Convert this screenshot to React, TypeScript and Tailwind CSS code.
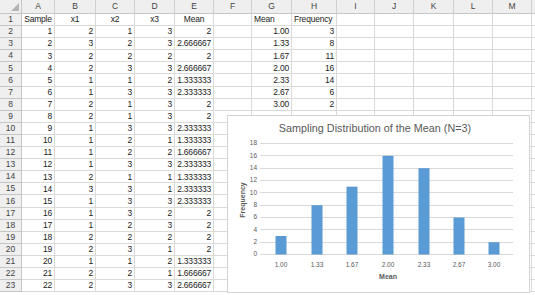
import React from "react";

const COLS: { l: string; w: number }[] = [
  { l: "A", w: 33 },
  { l: "B", w: 41 },
  { l: "C", w: 39 },
  { l: "D", w: 40 },
  { l: "E", w: 39 },
  { l: "F", w: 38 },
  { l: "G", w: 40 },
  { l: "H", w: 45 },
  { l: "I", w: 38 },
  { l: "J", w: 39 },
  { l: "K", w: 40 },
  { l: "L", w: 39 },
  { l: "M", w: 39 },
  { l: "", w: 30 },
];

const DATA: [number, number, number, number, string][] = [
  [1, 2, 1, 3, "2"],
  [2, 3, 2, 3, "2.666667"],
  [3, 2, 2, 2, "2"],
  [4, 2, 3, 3, "2.666667"],
  [5, 1, 1, 2, "1.333333"],
  [6, 1, 3, 3, "2.333333"],
  [7, 2, 1, 3, "2"],
  [8, 2, 1, 3, "2"],
  [9, 1, 3, 3, "2.333333"],
  [10, 1, 2, 1, "1.333333"],
  [11, 1, 2, 2, "1.666667"],
  [12, 1, 3, 3, "2.333333"],
  [13, 2, 1, 1, "1.333333"],
  [14, 3, 3, 1, "2.333333"],
  [15, 1, 3, 3, "2.333333"],
  [16, 1, 3, 2, "2"],
  [17, 1, 2, 3, "2"],
  [18, 2, 2, 2, "2"],
  [19, 2, 3, 1, "2"],
  [20, 1, 1, 2, "1.333333"],
  [21, 2, 2, 1, "1.666667"],
  [22, 2, 3, 3, "2.666667"],
];

const FREQ: [string, number][] = [
  ["1.00", 3],
  ["1.33", 8],
  ["1.67", 11],
  ["2.00", 16],
  ["2.33", 14],
  ["2.67", 6],
  ["3.00", 2],
];

type Cell = { t: string; a: "l" | "c" | "r" };

function rowCells(r: number): (Cell | null)[] {
  const cells: (Cell | null)[] = new Array(14).fill(null);
  if (r === 1) {
    cells[0] = { t: "Sample", a: "c" };
    cells[1] = { t: "x1", a: "c" };
    cells[2] = { t: "x2", a: "c" };
    cells[3] = { t: "x3", a: "c" };
    cells[4] = { t: "Mean", a: "c" };
    cells[6] = { t: "Mean", a: "l" };
    cells[7] = { t: "Frequency", a: "l" };
    return cells;
  }
  const d = DATA[r - 2];
  if (d) {
    cells[0] = { t: String(d[0]), a: "r" };
    cells[1] = { t: String(d[1]), a: "r" };
    cells[2] = { t: String(d[2]), a: "r" };
    cells[3] = { t: String(d[3]), a: "r" };
    cells[4] = { t: d[4], a: "r" };
  }
  const f = FREQ[r - 2];
  if (f) {
    cells[6] = { t: f[0], a: "r" };
    cells[7] = { t: String(f[1]), a: "r" };
  }
  return cells;
}

function Chart() {
  const y0 = 139;
  const unit = (139 - 28) / 18;
  const centers = [54, 90, 125, 161, 197, 232, 267];
  const ticks = [0, 2, 4, 6, 8, 10, 12, 14, 16, 18];
  return (
    <svg width="303" height="178" viewBox="0 0 303 178" className="block">
      <text
        x="148"
        y="17"
        textAnchor="middle"
        fontFamily="'Liberation Sans', Arial, sans-serif"
        fontSize="10.8"
        fill="#595959"
      >
        Sampling Distribution of the Mean (N=3)
      </text>
      {ticks.map((t) => {
        const y = y0 - t * unit;
        return (
          <g key={t}>
            <line x1="33" x2="286" y1={Math.round(y) + 0.5} y2={Math.round(y) + 0.5} stroke="#d9d9d9" strokeWidth="1" />
            <text
              x="30"
              y={y + 2.3}
              textAnchor="end"
              fontFamily="'Liberation Sans', Arial, sans-serif"
              fontSize="6.5"
              fill="#595959"
            >
              {t}
            </text>
          </g>
        );
      })}
      {FREQ.map(([lab, v], i) => {
        const h = v * unit;
        return (
          <g key={lab}>
            <rect x={centers[i] - 5.5} y={y0 - h + 0.5} width="11" height={h} fill="#5b9bd5" />
            <text
              x={centers[i]}
              y="151.5"
              textAnchor="middle"
              fontFamily="'Liberation Sans', Arial, sans-serif"
              fontSize="6.5"
              fill="#595959"
            >
              {lab}
            </text>
          </g>
        );
      })}
      <text
        x="161"
        y="163.5"
        textAnchor="middle"
        fontFamily="'Liberation Sans', Arial, sans-serif"
        fontSize="7"
        fontWeight="bold"
        fill="#595959"
      >
        Mean
      </text>
      <text
        x="0"
        y="0"
        transform="translate(17.5 85) rotate(-90)"
        textAnchor="middle"
        fontFamily="'Liberation Sans', Arial, sans-serif"
        fontSize="7"
        fontWeight="bold"
        fill="#595959"
      >
        Frequency
      </text>
    </svg>
  );
}

export default function App() {
  const rows = Array.from({ length: 23 }, (_, i) => i + 1);
  return (
    <div
      className="relative w-[535px] h-[295px] overflow-hidden bg-white text-[#222]"
      style={{ fontFamily: "'Liberation Sans', Arial, sans-serif" }}
    >
      {/* column header */}
      <div className="flex h-[14px] bg-[#efefef] border-b border-[#c6c6c6]">
        <div className="relative w-[22px] shrink-0 border-r border-[#c6c6c6]">
          <div className="absolute right-[2px] bottom-[2px] w-0 h-0 border-l-[8px] border-l-transparent border-b-[8px] border-b-[#b4b4b4]" />
        </div>
        {COLS.map((c, i) => (
          <div
            key={i}
            className="shrink-0 flex items-center justify-center border-r border-[#d0d0d0] text-[8.5px] text-[#444]"
            style={{ width: c.w }}
          >
            {c.l}
          </div>
        ))}
      </div>
      {rows.map((r) => {
        const cells = rowCells(r);
        return (
          <div key={r} className="flex h-[12.1px]">
            <div className="w-[22px] shrink-0 flex items-center justify-center bg-[#efefef] border-r border-b border-[#c6c6c6] text-[8.5px] text-[#444]">
              {r}
            </div>
            {COLS.map((c, i) => {
              const cell = cells[i];
              const align =
                cell?.a === "r" ? "justify-end pr-[2px]" : cell?.a === "c" ? "justify-center" : "justify-start pl-[2px]";
              return (
                <div
                  key={i}
                  className={`shrink-0 flex items-center whitespace-nowrap border-r border-b border-[#dadada] text-[8.5px] tracking-[-0.2px] leading-none ${align}`}
                  style={{ width: c.w }}
                >
                  {cell?.t ?? ""}
                </div>
              );
            })}
          </div>
        );
      })}
      {/* chart overlay */}
      <div className="absolute left-[227px] top-[115px] w-[303px] h-[178px] bg-white border border-[#d4d4d4] box-border">
        <div className="-m-px">
          <Chart />
        </div>
      </div>
    </div>
  );
}
